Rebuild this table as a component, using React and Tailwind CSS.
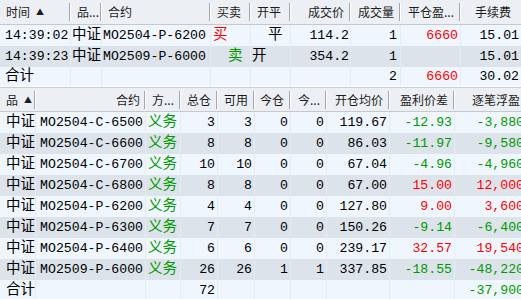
import React from 'react';

const mono = { fontFamily: '"Liberation Mono", "Noto Sans CJK SC", monospace' };

const RED = 'text-[#ff0000]';
const GREEN = 'text-[#009a00]';

const topCols = [
    { w: 'w-[71px]', title: '时间', sort: true, align: 'left' },
    { w: 'w-[31px]', title: '品...', align: 'left' },
    { w: 'w-[109px]', title: '合约', align: 'left' },
    { w: 'w-[40px]', title: '买卖', align: 'left' },
    { w: 'w-[40px]', title: '开平', align: 'left' },
    { w: 'w-[60px]', title: '成交价', align: 'right' },
    { w: 'w-[50px]', title: '成交量', align: 'right' },
    { w: 'w-[60px]', title: '平仓盈...', align: 'right' },
    { w: 'w-[62px]', title: '手续费', align: 'right', pr: 'pr-[10px]' },
];

const botCols = [
    { w: 'w-[36px]', title: '品', sort: true, align: 'left' },
    { w: 'w-[110px]', title: '合约', align: 'right', pr: 'pr-[4px]' },
    { w: 'w-[35px]', title: '方...', align: 'left' },
    { w: 'w-[37px]', title: '总仓', align: 'right' },
    { w: 'w-[37px]', title: '可用', align: 'right' },
    { w: 'w-[36px]', title: '今仓', align: 'right' },
    { w: 'w-[36px]', title: '今...', align: 'right' },
    { w: 'w-[63px]', title: '开仓均价', align: 'right' },
    { w: 'w-[65px]', title: '盈利价差', align: 'right' },
    { w: 'w-[72px]', title: '逐笔浮盈', align: 'right' },
];

const trades = [
    { time: '14:39:02', kind: '中证', code: 'MO2504-P-6200', side: '买', sideCls: `${RED} pl-[2px]`, oc: '平', ocCls: 'pl-[17px]', price: '114.2', qty: '1', pnl: '6660', fee: '15.01' },
    { time: '14:39:23', kind: '中证', code: 'MO2509-P-6000', side: '卖', sideCls: `${GREEN} pl-[17px]`, oc: '开', ocCls: 'pl-[1px]', price: '354.2', qty: '1', pnl: '', fee: '15.01' },
];

const positions = [
    ['MO2504-C-6500', '3', '3', '0', '0', '119.67', '-12.93', '-3,880'],
    ['MO2504-C-6600', '8', '8', '0', '0', '86.03', '-11.97', '-9,580'],
    ['MO2504-C-6700', '10', '10', '0', '0', '67.04', '-4.96', '-4,960'],
    ['MO2504-C-6800', '8', '8', '0', '0', '67.00', '15.00', '12,000'],
    ['MO2504-P-6200', '4', '4', '0', '0', '127.80', '9.00', '3,600'],
    ['MO2504-P-6300', '7', '7', '0', '0', '150.26', '-9.14', '-6,400'],
    ['MO2504-P-6400', '6', '6', '0', '0', '239.17', '32.57', '19,540'],
    ['MO2509-P-6000', '26', '26', '1', '1', '337.85', '-18.55', '-48,220'],
];

const HeaderRow = ({ cols, h }) => (
    <div className={`flex ${h} bg-[#eceff3] border-b border-[#c5c9ce] shrink-0`}>
        {cols.map((c, i) => (
            <div key={i} className={`${c.w} shrink-0 flex items-center`}>
                <div className={`flex-1 min-w-0 overflow-hidden whitespace-nowrap flex items-center text-[12px] text-[#1c1c1c] ${c.align === 'right' ? `justify-end ${c.pr || 'pr-[5px]'}` : 'pl-[6px]'}`}
                    style={{ fontFamily: '"Noto Sans CJK SC", "Noto Sans", sans-serif' }}>
                    {c.title}
                    {c.sort && <span className="ml-[6px] text-[8px] leading-none">▲</span>}
                </div>
                <div className="w-px h-[18px] bg-[#a3a7ac] self-center shrink-0"></div>
                <div className="w-px h-[18px] bg-white self-center shrink-0"></div>
            </div>
        ))}
    </div>
);

const Cell = ({ w, cls = '', children }) => (
    <div className={`${w} shrink-0 overflow-hidden whitespace-nowrap border-r border-[#e6ebf1] ${cls}`}>{children}</div>
);

const sign = v => (v.startsWith('-') ? GREEN : RED);

export default function App() {
    return (
        <div className="w-[521px] h-[299px] overflow-hidden bg-[#f0f6fd] flex flex-col text-black text-[13.2px]" style={mono}>

            {/* Trades */}
            <div className="h-[86px] overflow-hidden flex flex-col shrink-0">
                <HeaderRow cols={topCols} h="h-[25px]" />
                {trades.map((t, i) => (
                    <div key={i} className={`flex h-[21px] leading-[21px] shrink-0 ${i % 2 ? 'bg-[#dde3ea]' : 'bg-[#f0f6fd]'}`}>
                        <Cell w={topCols[0].w} cls="pl-[5px]">{t.time}</Cell>
                        <Cell w={topCols[1].w} cls="pl-[1px] text-[14.5px]">{t.kind}</Cell>
                        <Cell w={topCols[2].w} cls="pl-[1px]">{t.code}</Cell>
                        <Cell w={topCols[3].w} cls={`text-[14.5px] ${t.sideCls}`}>{t.side}</Cell>
                        <Cell w={topCols[4].w} cls={`text-[14.5px] ${t.ocCls}`}>{t.oc}</Cell>
                        <Cell w={topCols[5].w} cls="text-right pr-[1px]">{t.price}</Cell>
                        <Cell w={topCols[6].w} cls="text-right pr-[3px]">{t.qty}</Cell>
                        <Cell w={topCols[7].w} cls={`text-right pr-[2px] ${RED}`}>{t.pnl}</Cell>
                        <Cell w={topCols[8].w} cls="text-right pr-[3px]">{t.fee}</Cell>
                    </div>
                ))}
                <div className="flex h-[21px] leading-[19px] shrink-0 bg-[#f0f6fd]">
                    <Cell w={topCols[0].w} cls="pl-[5px] text-[14.5px]">合计</Cell>
                    <Cell w={topCols[1].w} />
                    <Cell w={topCols[2].w} />
                    <Cell w={topCols[3].w} />
                    <Cell w={topCols[4].w} />
                    <Cell w={topCols[5].w} />
                    <Cell w={topCols[6].w} cls="text-right pr-[3px]">2</Cell>
                    <Cell w={topCols[7].w} cls={`text-right pr-[2px] ${RED}`}>6660</Cell>
                    <Cell w={topCols[8].w} cls="text-right pr-[3px]">30.02</Cell>
                </div>
            </div>

            {/* Splitter */}
            <div className="h-[2px] shrink-0 bg-white border-b border-[#c9cdd2]"></div>

            {/* Positions */}
            <div className="flex-1 overflow-hidden flex flex-col">
                <HeaderRow cols={botCols} h="h-[24px]" />
                {positions.map((r, i) => (
                    <div key={i} className={`flex h-[21px] leading-[21px] shrink-0 ${i % 2 ? 'bg-[#dde3ea]' : 'bg-[#f0f6fd]'}`}>
                        <Cell w={botCols[0].w} cls="pl-[6px] text-[14.5px]">中证</Cell>
                        <Cell w={botCols[1].w} cls="text-right pr-[2px]">{r[0]}</Cell>
                        <Cell w={botCols[2].w} cls={`pl-[2px] text-[14.5px] ${GREEN}`}>义务</Cell>
                        <Cell w={botCols[3].w} cls="text-right pr-[2px]">{r[1]}</Cell>
                        <Cell w={botCols[4].w} cls="text-right pr-[2px]">{r[2]}</Cell>
                        <Cell w={botCols[5].w} cls="text-right pr-[2px]">{r[3]}</Cell>
                        <Cell w={botCols[6].w} cls="text-right pr-[2px]">{r[4]}</Cell>
                        <Cell w={botCols[7].w} cls="text-right pr-[2px]">{r[5]}</Cell>
                        <Cell w={botCols[8].w} cls={`text-right pr-[2px] ${sign(r[6])}`}>{r[6]}</Cell>
                        <Cell w={botCols[9].w} cls={`text-right pr-[2px] ${sign(r[7])}`}>{r[7]}</Cell>
                    </div>
                ))}
                <div className="flex h-[21px] leading-[21px] shrink-0 bg-[#f0f6fd]">
                    <Cell w={botCols[0].w} cls="pl-[6px] text-[14.5px]">合计</Cell>
                    <Cell w={botCols[1].w} />
                    <Cell w={botCols[2].w} />
                    <Cell w={botCols[3].w} cls="text-right pr-[2px]">72</Cell>
                    <Cell w={botCols[4].w} />
                    <Cell w={botCols[5].w} />
                    <Cell w={botCols[6].w} />
                    <Cell w={botCols[7].w} />
                    <Cell w={botCols[8].w} />
                    <Cell w={botCols[9].w} cls={`text-right pr-[2px] ${GREEN}`}>-37,900</Cell>
                </div>
            </div>
        </div>
    );
}
